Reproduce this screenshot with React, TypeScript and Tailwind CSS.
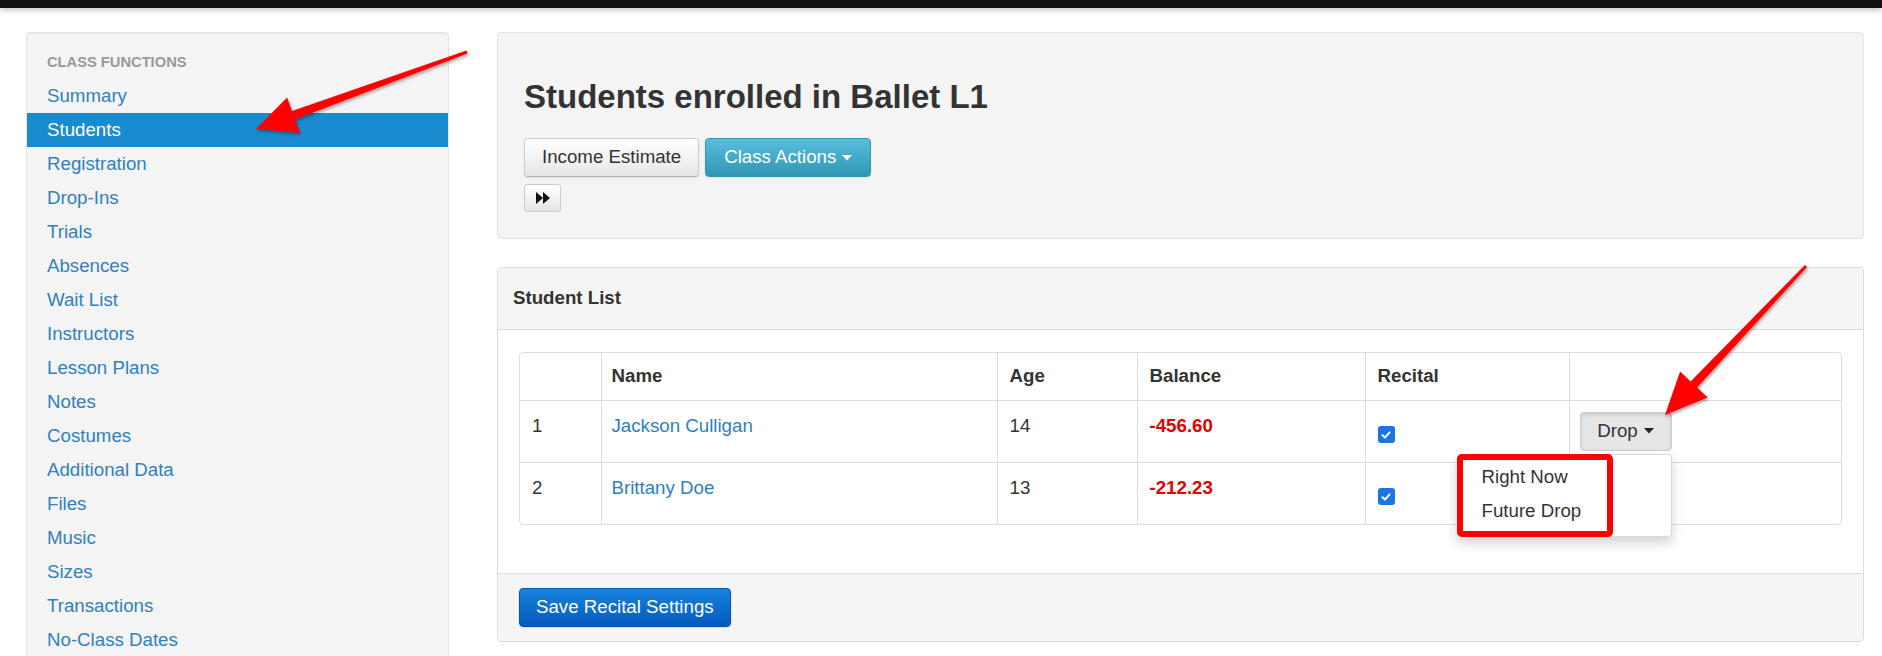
import React from 'react';

const navItems = [
    'Summary', 'Students', 'Registration', 'Drop-Ins', 'Trials', 'Absences', 'Wait List',
    'Instructors', 'Lesson Plans', 'Notes', 'Costumes', 'Additional Data', 'Files', 'Music',
    'Sizes', 'Transactions', 'No-Class Dates',
];

const students = [
    { n: 1, name: 'Jackson Culligan', age: 14, balance: '-456.60' },
    { n: 2, name: 'Brittany Doe', age: 13, balance: '-212.23' },
];

// tapered arrow polygon from tail to tip
const arrowPoints = (tx: number, ty: number, hx: number, hy: number, w0: number, w1: number, headLen: number, headW: number) => {
    const len = Math.hypot(hx - tx, hy - ty);
    const dx = (hx - tx) / len;
    const dy = (hy - ty) / len;
    const nx = -dy;
    const ny = dx;
    const bx = hx - dx * headLen;
    const by = hy - dy * headLen;
    const pts = [
        [tx + nx * w0 / 2, ty + ny * w0 / 2],
        [bx + nx * w1 / 2, by + ny * w1 / 2],
        [bx + nx * headW / 2, by + ny * headW / 2],
        [hx, hy],
        [bx - nx * headW / 2, by - ny * headW / 2],
        [bx - nx * w1 / 2, by - ny * w1 / 2],
        [tx - nx * w0 / 2, ty - ny * w0 / 2],
    ];
    return pts.map(p => `${p[0].toFixed(1)},${p[1].toFixed(1)}`).join(' ');
};

const Caret: React.FC<{ color: string }> = ({ color }) => (
    <svg width="10" height="6" viewBox="0 0 10 6" className="ml-[6px] inline-block">
        <polygon points="0,0 10,0 5,5.5" fill={color} />
    </svg>
);

const CheckBox: React.FC = () => (
    <span className="inline-flex h-[17px] w-[17px] items-center justify-center rounded-[3px] bg-[#1b74e4]">
        <svg width="12" height="12" viewBox="0 0 12 12">
            <path d="M2.5 6.3 L5 8.6 L9.6 3.4" stroke="#fff" strokeWidth="2" fill="none" strokeLinecap="round" strokeLinejoin="round" />
        </svg>
    </span>
);

const App: React.FC = () => {
    return (
        <div className="relative h-[656px] w-full overflow-hidden bg-white font-['Liberation_Sans',Arial,sans-serif] text-[18.7px] text-[#333]">
            <div className="h-[8px] bg-[#111] shadow-[0_2px_6px_rgba(0,0,0,0.25)]" />

            <div className="flex gap-[48px] pl-[26px] pr-[18px] pt-[24px]">
                {/* sidebar */}
                <aside className="w-[423px] shrink-0 rounded-[4px] border border-[#e3e3e3] bg-[#f4f4f4] pb-[40px] pt-[16px] shadow-[inset_0_1px_1px_rgba(0,0,0,0.04)]">
                    <div className="mb-[4px] px-[20px] text-[14.7px] font-bold uppercase leading-[26px] text-[#999]">
                        Class Functions
                    </div>
                    {navItems.map(item => (
                        <div
                            key={item}
                            className={`h-[34px] px-[20px] leading-[34px] ${item === 'Students' ? 'bg-[#1a8bcf] text-white' : 'text-[#3180c0]'}`}
                        >
                            {item}
                        </div>
                    ))}
                </aside>

                {/* main column */}
                <main className="flex min-w-0 flex-1 flex-col gap-[28px]">
                    <div className="h-[207px] rounded-[4px] border border-[#e3e3e3] bg-[#f4f4f4] px-[26px] pt-[44px]">
                        <h1 className="text-[33px] font-bold leading-[40px] text-[#333]">Students enrolled in Ballet L1</h1>
                        <div className="mt-[21px] flex gap-[6px]">
                            <button className="h-[39px] rounded-[4px] border border-[#ccc] border-b-[#b3b3b3] bg-gradient-to-b from-white to-[#e6e6e6] px-[17px] text-[#333] shadow-[0_1px_2px_rgba(0,0,0,0.08)]">
                                Income Estimate
                            </button>
                            <button className="flex h-[39px] items-center rounded-[4px] border border-[#2f96b4] bg-gradient-to-b from-[#58bedc] to-[#2f96b4] px-[18px] text-white shadow-[0_1px_2px_rgba(0,0,0,0.08)]">
                                Class Actions
                                <Caret color="#fff" />
                            </button>
                        </div>
                        <button className="mt-[7px] flex h-[28px] w-[37px] items-center justify-center rounded-[3px] border border-[#ccc] bg-gradient-to-b from-white to-[#e6e6e6]">
                            <svg width="14" height="12" viewBox="0 0 14 12">
                                <polygon points="0,0 7,6 0,12" fill="#111" />
                                <polygon points="7,0 14,6 7,12" fill="#111" />
                            </svg>
                        </button>
                    </div>

                    <div className="rounded-[4px] border border-[#ddd] bg-white">
                        <div className="flex h-[62px] items-center rounded-t-[4px] border-b border-[#ddd] bg-[#f5f5f5] px-[15px] font-bold">
                            Student List
                        </div>
                        <div className="px-[21px] pb-[48px] pt-[22px]">
                            <div className="rounded-[4px] border border-[#ddd]">
                                <table className="w-full table-fixed border-collapse">
                                    <colgroup>
                                        <col className="w-[81px]" />
                                        <col className="w-[396px]" />
                                        <col className="w-[140px]" />
                                        <col className="w-[228px]" />
                                        <col className="w-[204px]" />
                                        <col />
                                    </colgroup>
                                    <thead>
                                        <tr className="h-[47px] text-left font-bold">
                                            <th className="px-[12px]"></th>
                                            <th className="border-l border-[#ddd] px-[10px]">Name</th>
                                            <th className="border-l border-[#ddd] px-[12px]">Age</th>
                                            <th className="border-l border-[#ddd] px-[12px]">Balance</th>
                                            <th className="border-l border-[#ddd] px-[12px]">Recital</th>
                                            <th className="border-l border-[#ddd] px-[12px]"></th>
                                        </tr>
                                    </thead>
                                    <tbody>
                                        {students.map((s, i) => (
                                            <tr key={s.n} className="h-[62px] border-t border-[#ddd] align-top">
                                                <td className="px-[12px] pt-[11px] leading-[27px]">{s.n}</td>
                                                <td className="border-l border-[#ddd] px-[10px] pt-[11px] leading-[27px] text-[#2d7fc0]">{s.name}</td>
                                                <td className="border-l border-[#ddd] px-[12px] pt-[11px] leading-[27px]">{s.age}</td>
                                                <td className="border-l border-[#ddd] px-[12px] pt-[11px] font-bold leading-[27px] text-[#e00000]">{s.balance}</td>
                                                <td className="border-l border-[#ddd] px-[12px] pt-[20px]">
                                                    <CheckBox />
                                                </td>
                                                <td className="border-l border-[#ddd] px-[10px] pt-[11px]">
                                                    <div className={`relative inline-block ${i === 0 ? 'z-20' : 'z-0'}`}>
                                                        <button className="flex h-[39px] w-[92px] items-center justify-center rounded-[4px] border border-[#ccc] bg-[#e6e6e6] text-[#333] shadow-[inset_0_2px_4px_rgba(0,0,0,0.12)]">
                                                            Drop
                                                            <Caret color="#222" />
                                                        </button>
                                                        {i === 0 && (
                                                            <div className="absolute right-0 top-[calc(100%+3px)] h-[83px] w-[215px] rounded-[4px] border border-[rgba(0,0,0,0.15)] bg-white pt-[5px] shadow-[0_6px_12px_rgba(0,0,0,0.175)]">
                                                                <div className="h-[34px] pl-[24px] leading-[34px] text-[#333]">Right Now</div>
                                                                <div className="h-[34px] pl-[24px] leading-[34px] text-[#333]">Future Drop</div>
                                                                <div className="absolute -left-px -top-px h-[83px] w-[156px] rounded-[5px] border-[6px] border-[#f00]" />
                                                            </div>
                                                        )}
                                                    </div>
                                                </td>
                                            </tr>
                                        ))}
                                    </tbody>
                                </table>
                            </div>
                        </div>
                        <div className="rounded-b-[4px] border-t border-[#ddd] bg-[#f5f5f5] px-[21px] py-[14px]">
                            <button className="h-[39px] rounded-[4px] border border-[#0052b8] bg-gradient-to-b from-[#1784de] to-[#0758bd] px-[16px] text-white shadow-[0_1px_2px_rgba(0,0,0,0.1)]">
                                Save Recital Settings
                            </button>
                        </div>
                    </div>
                </main>
            </div>

            {/* annotation arrows */}
            <svg className="pointer-events-none absolute inset-0 z-50" width="1882" height="656">
                <defs>
                    <filter id="arrowShadow" x="-20%" y="-20%" width="140%" height="140%">
                        <feDropShadow dx="1" dy="2" stdDeviation="1.5" floodColor="#000" floodOpacity="0.35" />
                    </filter>
                </defs>
                <polygon points={arrowPoints(467, 52, 256, 129, 3, 9, 40, 38)} fill="#ff0000" filter="url(#arrowShadow)" />
                <polygon points={arrowPoints(1806, 266, 1665, 415, 3, 9, 42, 38)} fill="#ff0000" filter="url(#arrowShadow)" />
            </svg>
        </div>
    );
};

export default App;
